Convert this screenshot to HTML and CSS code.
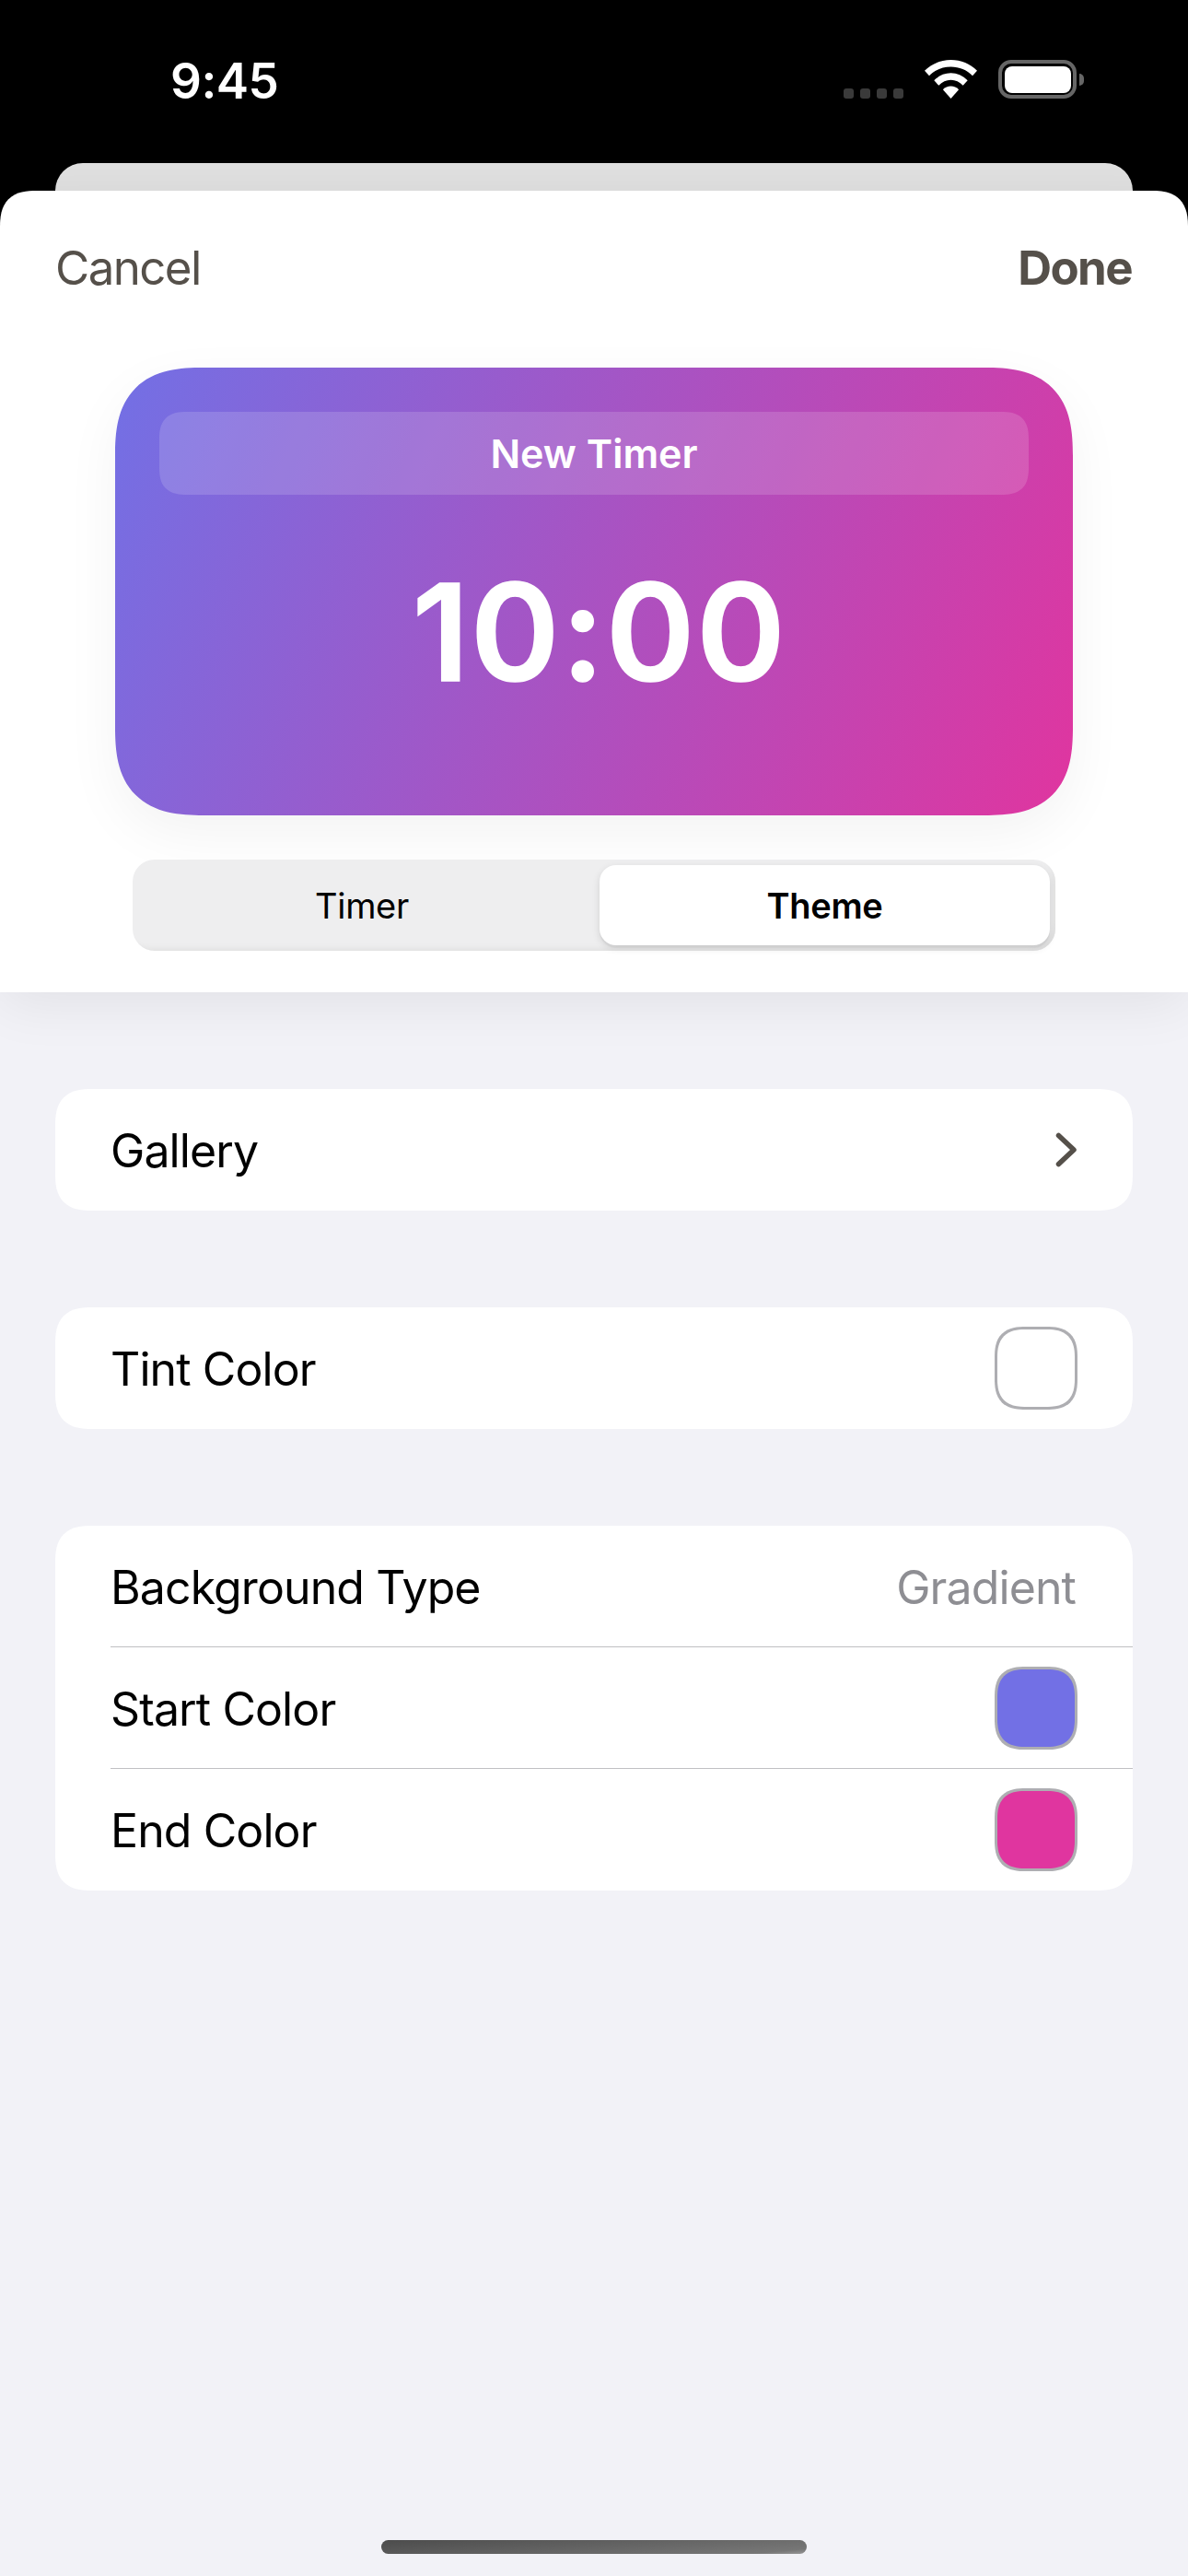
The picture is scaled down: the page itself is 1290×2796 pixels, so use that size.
FILE: index.html
```html
<!DOCTYPE html>
<html lang="en">
<head>
<meta charset="utf-8">
<title>New Timer</title>
<link rel="stylesheet" href="styles.css">
</head>
<body>
<div class="phone">
  <header class="status">
    <span class="clock">9:45</span>
    <div class="status-icons">
      <div class="signal"><i></i><i></i><i></i><i></i></div>
      <svg class="wifi" width="57" height="42" viewBox="0 0 57 42"><path fill="#fff" d="M28.5 0C17.3 0 7.600 4.300 0 11.700L5 17.300C11.200 11 19.300 7.600 28.500 7.600S45.800 11 52 17.300L57 11.700C49.400 4.300 39.700 0 28.500 0Z"/><path fill="#fff" d="M28.500 14.300C21.900 14.300 15.500 17 10.300 22.300L15.300 27.800C19 24 23.500 21.800 28.500 21.800S38 24 41.700 27.800L46.700 22.300C41.500 17 35.100 14.300 28.500 14.300Z"/><path fill="#fff" d="M28.500 28.500C25.200 28.500 22.200 29.800 19.900 32.200L28.500 42L37.100 32.200C34.800 29.800 31.800 28.500 28.500 28.500Z"/></svg>
      <div class="battery"><div class="battery-body"><div class="battery-fill"></div></div><div class="battery-cap"></div></div>
    </div>
  </header>
  <div class="peek"></div>
  <section class="sheet">
    <nav class="nav"><span class="nav-btn">Cancel</span><span class="nav-btn nav-done">Done</span></nav>
    <div class="preview">
      <div class="preview-title">New Timer</div>
      <div class="preview-time">10:00</div>
    </div>
    <div class="segment">
      <div class="seg-item seg-first">Timer</div>
      <div class="seg-item seg-active">Theme</div>
    </div>
  </section>
  <main class="content">
    <div class="group">
      <div class="row"><span>Gallery</span>
        <svg class="chev" width="24" height="38" viewBox="0 0 24 38"><path d="M3.500 3.500L20 19L3.500 34.500" fill="none" stroke="#55504a" stroke-width="5.500" stroke-linecap="round" stroke-linejoin="round"/></svg>
      </div>
    </div>
    <div class="group">
      <div class="row"><span>Tint Color</span><span class="swatch swatch-white"></span></div>
    </div>
    <div class="group">
      <div class="row row-sep"><span>Background Type</span><span class="value">Gradient</span></div>
      <div class="row row-sep"><span>Start Color</span><span class="swatch swatch-start"></span></div>
      <div class="row"><span>End Color</span><span class="swatch swatch-end"></span></div>
    </div>
  </main>
  <div class="home-bar"></div>
</div>
</body>
</html>
```
FILE: styles.css
```css
* { box-sizing: border-box; }
html, body { margin: 0; padding: 0; }
body { font-family: Inter, "Liberation Sans", sans-serif; background: #f2f2f7; }
.phone { width: 1290px; height: 2796px; position: relative; overflow: hidden; background: #000; display: flex; flex-direction: column; }
.status { height: 177px; flex: none; display: flex; justify-content: space-between; padding: 0 113px 0 185px; color: #fff; position: relative; }
.clock { font-size: 53px; font-weight: 600; line-height: 62px; margin-top: 57px; letter-spacing: -0.5px; }
.status-icons { display: flex; align-items: flex-end; height: 107px; }
.signal { display: flex; gap: 7px; margin-right: 23px; }
.signal i { width: 11px; height: 11px; border-radius: 3px; background: #3a3a3a; display: block; }
.wifi { display: block; margin-right: 23px; }
.battery { display: flex; align-items: center; }
.battery-body { width: 85px; height: 42px; border: 4.500px solid #666; border-radius: 14px; padding: 2.500px; }
.battery-fill { width: 100%; height: 100%; background: #fff; border-radius: 8px; }
.battery-cap { width: 5px; height: 13px; margin-left: 3px; background: #666; border-radius: 0 5px 5px 0; }
.peek { height: 30px; flex: none; margin: 0 60px; background: #e0e0e0; border-radius: 30px 30px 0 0; }
.sheet { flex: none; height: 870px; background: #fff; border-radius: 32px 32px 0 0; position: relative; z-index: 1; box-shadow: 0 12px 60px rgba(0,0,0,.07); display: flex; flex-direction: column; align-items: center; }
.nav { width: 100%; height: 192px; flex: none; padding: 53px 60px 0; display: flex; justify-content: space-between; align-items: flex-start; font-size: 51px; line-height: 62px; color: #55504a; letter-spacing: -1.600px; }
.nav-done { font-weight: 700; margin-right: 1px; }
.preview { width: 1040px; height: 486px; flex: none; border-radius: 78px; padding: 48px 48px 0; background: linear-gradient(112deg, #7270e5 0%, #e0359f 100%); box-shadow: 0 20px 60px rgba(0,0,0,.05); color: #fff; }
.preview-title { height: 90px; border-radius: 24px; background: rgba(255,255,255,.15); text-align: center; font-size: 43px; font-weight: 600; line-height: 90px; }
.preview-time { text-align: center; font-size: 146px; font-weight: 600; -webkit-text-stroke: 1.500px #fff; line-height: 176px; margin-top: 61px; padding-left: 12px; letter-spacing: 2px; }
.segment { width: 1002px; height: 99px; flex: none; margin-top: 48px; border-radius: 24px; background: #eeeeef; padding: 6px; display: grid; grid-template-columns: 501px 489px; box-shadow: inset -6px -6px 6px -4px #dfdfdf; }
.seg-item { display: flex; align-items: center; justify-content: center; font-size: 38px; font-weight: 600; color: #000; letter-spacing: -0.3px; }
.seg-first { padding-right: 15px; font-weight: 400; }
.seg-active { background: #fff; border-radius: 18px; box-shadow: 0 3px 8px rgba(0,0,0,.12), 0 3px 1px rgba(0,0,0,.04); height: 87px; }
.content { flex: 1; background: #f2f2f7; padding: 105px 60px 0; display: flex; flex-direction: column; gap: 105px; }
.group { background: #fff; border-radius: 32px; overflow: hidden; padding-left: 60px; }
.row { height: 132px; display: flex; align-items: center; justify-content: space-between; padding: 2px 60px 0 0; font-size: 50px; color: #000; letter-spacing: -0.900px; }
.row-sep { box-shadow: inset 0 -1px 0 #c0c0c3; }
.row .swatch { margin-top: -2px; }
.value { color: #8e8e93; margin-right: 2px; }
.chev { display: block; margin-top: -2px; }
.swatch { width: 90px; height: 90px; border-radius: 28px; border: 3px solid #aeaeb2; display: block; }
.swatch-white { background: #fff; }
.swatch-start { background: #7270e5; }
.swatch-end { background: #e0359f; }
.home-bar { position: absolute; left: 414px; top: 2757px; width: 462px; height: 15px; border-radius: 8px; background: linear-gradient(175deg, #4c4c4c 0%, #767676 90%, #999 100%); }
@supports (corner-shape: superellipse(1.4)) {
  .preview { border-radius: 96px; corner-shape: superellipse(1.4); }
  .group { border-radius: 40px; corner-shape: superellipse(1.4); }
  .sheet { border-radius: 40px 40px 0 0; corner-shape: superellipse(1.4); }
  .swatch { border-radius: 34px; corner-shape: superellipse(1.4); }
  .preview-title { border-radius: 30px; corner-shape: superellipse(1.4); }
}
```
